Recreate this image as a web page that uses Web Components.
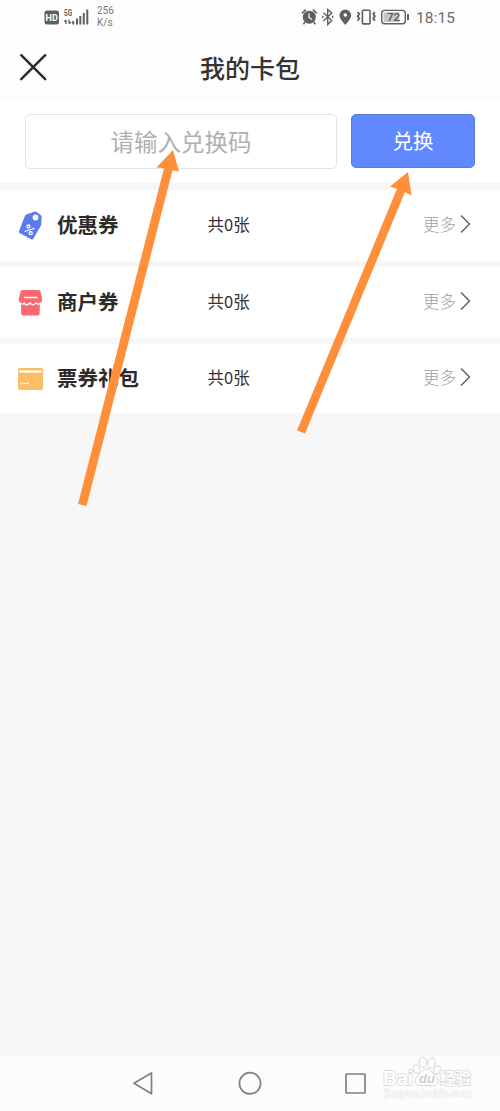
<!DOCTYPE html>
<html lang="zh-CN">
<head>
<meta charset="utf-8">
<title>我的卡包</title>
<style>
html,body{margin:0;height:100%;overflow:hidden}
body{font-family:"Noto Sans CJK SC",sans-serif;color:#2d2d2d;background:#f7f7f7}
</style>
</head>
<body>
<card-app></card-app>
<script>
const define=(name,html)=>customElements.define(name,class extends HTMLElement{
  constructor(){
    super();
    const t=document.createElement('template');
    t.innerHTML=html;
    this.attachShadow({mode:'open'}).append(t.content.cloneNode(true));
  }
});

define('status-bar',`<style>
:host{display:flex;height:35px;background:#fdfdfd;color:#606060;font-family:Roboto,sans-serif;align-items:flex-start}
svg{display:block;flex:none}
.net{margin-left:44px}
.rate{margin:5px 0 0 8px;font-size:10px;line-height:12px;color:#777}
.right{margin-left:auto;display:flex;padding-right:44px}
.time{width:40px;margin-left:6px;font-size:15.5px;line-height:20px;margin-top:8px;color:#6b6b6b;letter-spacing:.1px;white-space:nowrap}
</style>
<svg class="net" width="45" height="35" viewBox="44 0 45 35">
<rect x="44.5" y="10.5" width="14.5" height="14" rx="2.5" fill="#606060"/>
<text x="51.7" y="21" text-anchor="middle" font-family="Roboto" font-size="9" font-weight="700" fill="#fff">HD</text>
<text x="64" y="16" font-family="Roboto" font-size="8.5" font-weight="700" fill="#606060" textLength="8" lengthAdjust="spacingAndGlyphs">5G</text>
<path d="M66 24v-4m-1.6 1.8L66 19.8M69 19.5v4m1.8-1.7L69 23.8" stroke="#606060" stroke-width="1.3" fill="none"/>
<path d="M73.2 21v3.5M77 18.5v6M80.3 16v8.5M83.8 13v11.5M87.3 9.5v15" stroke="#606060" stroke-width="2"/>
</svg>
<div class="rate">256<br>K/s</div>
<div class="right">
<svg width="110" height="35" viewBox="300 0 110 35">
<g fill="none" stroke="#606060">
<circle cx="309.3" cy="17.2" r="6.5" fill="#606060" stroke="none"/>
<path d="M302 13.3l3.8-3.6M316.700 13.300l-3.800-3.600M305 22l-1.600 2.200M313.700 22l1.600 2.200" stroke-width="1.700"/>
<path d="M309 13.500v4l3 2" stroke="#fff" stroke-width="1.200"/>
<path d="M323.500 12.800l8.200 7.700-4 4V9.500l4 3.500-8.200 7.900" stroke-width="1.400"/>
<path d="M322.800 15.800v2.200m9.800-2.200v2.200" stroke-width="1.400"/>
<path d="M345.300 25C342 21 339.500 18.500 339.500 15.300a5.800 5.800 0 0 1 11.600 0c0 3.200-2.500 5.700-5.800 9.700z" fill="#606060" stroke="none"/>
<circle cx="345.300" cy="15" r="1.800" fill="#fff" stroke="none"/>
<rect x="362.400" y="10.300" width="7.600" height="13.600" rx="1" stroke-width="1.600"/>
<path d="M357.700 12l1.500 2-1.500 2.200 1.500 2-1.500 2.500M374.800 12l-1.500 2 1.500 2.200-1.500 2 1.500 2.500" stroke-width="1.900"/>
<rect x="381.700" y="10.400" width="23.600" height="13.400" rx="3" stroke-width="1.400" fill="#fff"/>
<path d="M385 12.200h14.500v9.800H385q-1.600 0-1.600-1.600v-6.600q0-1.600 1.600-1.600z" fill="#c8c8c8" stroke="none"/>
<path d="M408 14v6" stroke-width="2"/></g>
<text x="393.500" y="21.200" text-anchor="middle" font-family="Roboto" font-size="11.500" font-weight="500" fill="#555">72</text>
</svg>
<div class="time">18:15</div></div>`);

define('page-header',`<style>
:host{display:grid;grid-template-columns:66px 1fr 66px;height:65px;background:#fdfdfd;align-items:center}
h1{margin:-2px 0 0;text-align:center;font-family:KaiTi,STKaiti,"Noto Sans CJK SC",sans-serif;font-size:25px;font-weight:500;line-height:36px;color:#333}
svg{margin:-2px 0 0 19px}
</style>
<svg width="28" height="28" viewBox="0 0 28 28"><path d="M2.200 2.200l24 24M26.200 2.200L2.200 26.200" stroke="#292929" stroke-width="2.400" stroke-linecap="round"/></svg>
<h1><slot></slot></h1>`);

define('redeem-form',`<style>
:host{display:flex;height:83px;box-sizing:border-box;padding:14px 25px;gap:14px;background:#fff}
.field,.btn{box-sizing:border-box;text-align:center;border-radius:5px}
.field{width:312px;height:55px;border:1px solid #e4e4e4;font-size:23.5px;line-height:53px;color:#b0b0b0}
.btn{width:124px;height:54px;border:1px solid #5b78df;background:#6288ff;color:#fff;font-size:20.5px;line-height:50px}
</style>
<div class="field"><slot name="hint"></slot></div><div class="btn"><slot></slot></div>`);

define('coupon-row',`<style>
:host{display:grid;grid-template-columns:57px 150px 1fr auto 44px;height:71px;box-sizing:border-box;padding-bottom:3px;background:#fff;align-items:center}
::slotted(svg){display:block;margin-left:17px}
b{font-size:20.5px;line-height:30px;font-weight:700;color:#2b2b2b}
.n{font-size:16.5px;line-height:24px;color:#333;margin-left:.5px}
.more{font-size:16.5px;line-height:24px;color:#a0a0a0;font-weight:300}
.c{margin-left:3px;display:block}
</style>
<slot name="icon"></slot><b><slot></slot></b><span class="n"><slot name="count"></slot></span><span class="more">更多</span>
<svg class="c" width="14" height="20" viewBox="0 0 14 20"><path d="M2 1.500l8.500 8.500L2 18.500" fill="none" stroke="#666" stroke-width="1.500"/></svg>`);

define('nav-bar',`<style>
:host{display:block;height:55px;background:#fcfcfc}
svg{display:block}
</style>
<svg width="500" height="55" viewBox="0 1056 500 55">
<g fill="none" stroke="#808080" stroke-width="1.700" stroke-linejoin="round">
<path d="M134 1083.300L151.500 1073v20.700z"/><circle cx="250" cy="1083.300" r="10.600"/><rect x="346" y="1074" width="19" height="19" rx=".6"/></g></svg>`);

define('brand-mark',`<style>
:host{display:block}
svg{display:block}
</style>
<svg width="100" height="56" viewBox="378 1052 100 56">
<g fill="#fefefe" stroke="#d6d6d6" stroke-width="1.400" paint-order="stroke" stroke-linejoin="round" font-weight="700">
<text x="383" y="1085" font-family="Liberation Sans" font-size="20" textLength="30" lengthAdjust="spacingAndGlyphs">Bai</text>
<text x="440" y="1083.500" font-family="Noto Sans CJK SC" font-size="16" textLength="31" lengthAdjust="spacingAndGlyphs">经验</text>
<text x="384" y="1097" font-family="Liberation Sans" font-size="10" font-weight="400" stroke="#e6e6e6" stroke-width="1" textLength="88" lengthAdjust="spacingAndGlyphs">jingyan.baidu.com</text>
</g>
<g fill="#fefefe" stroke="#d6d6d6" stroke-width="1">
<ellipse cx="416.500" cy="1069" rx="3.200" ry="4.400" transform="rotate(-20 416.500 1069)"/>
<ellipse cx="422.800" cy="1062.300" rx="3.600" ry="5"/><ellipse cx="431.500" cy="1063" rx="3.600" ry="5" transform="rotate(12 431.500 1063)"/>
<ellipse cx="437" cy="1070" rx="3.200" ry="4.500" transform="rotate(18 437 1070)"/>
<path d="M426.800 1069c4 0 5.200 3.500 8.700 6.700c4.500 4 2.500 9.800-2 9.800h-13.500c-5 0-6.500-5.800-2-9.800c3.500-3.200 4.800-6.700 8.800-6.700z"/>
</g>
<text x="419" y="1083.300" font-family="Liberation Sans" font-size="13" font-weight="700" font-style="italic" fill="#cfcfcf">du</text>
</svg>`);

define('pointer-arrows',`<style>
:host{display:block;pointer-events:none}
svg{display:block}
</style>
<svg width="500" height="520" viewBox="0 0 500 520" fill="#ff8f3b">
<path d="M173 150L156.500 167.500L164 168.200L78 504L86.500 506L172.500 170.200L179 171.500Z"/>
<path d="M408 172L390 186.500L397 188.800L297 430.500L305 433.500L405 192L411.500 195.500Z"/>
</svg>`);

define('card-app',`<style>
:host{display:flex;flex-direction:column;position:relative;height:1111px;width:500px;background:#f7f7f7}
main{display:flex;flex-direction:column;gap:6px;padding-top:7px;flex:1}
coupon-row:nth-of-type(3){height:69px}
pointer-arrows{position:absolute;left:0;top:0}
brand-mark{position:absolute;left:378px;top:1052px}
</style>
<status-bar></status-bar>
<page-header>我的卡包</page-header>
<redeem-form><span slot="hint">请输入兑换码</span>兑换</redeem-form>
<main>
<coupon-row><svg slot="icon" width="27" height="31" viewBox="17 209.500 27 31"><path d="M26.500 215l7.500-2.800q1.300-.4 2.600.4l4 3q1.200.9 1.100 2.500l-.6 7.600-7.600 13.400q-.8 1.300-2.200.6l-11.500-6q-1.300-.8-.7-2.200l5.800-14.900q.5-1.200 1.600-1.600z" fill="#5b7bee"/><circle cx="35.500" cy="218" r="2.900" fill="#fff"/><path d="M24.500 232l10-3.200" stroke="#fff" stroke-width="1.300"/><g fill="none" stroke="#fff" stroke-width="1.300"><circle cx="28.400" cy="227" r="1.500"/><circle cx="30.700" cy="233.700" r="1.500"/></g></svg>优惠券<span slot="count">共0张</span></coupon-row>
<coupon-row><svg slot="icon" width="27" height="31" viewBox="17 286 27 31"><path d="M22.500 290h16q1.500 0 2 1.500l1.700 7.500q0 3.500-2.300 4l-.3 10.500q0 2-2 2H23.200q-2 0-2-2l-.2-10.500q-2.500-.5-2.300-4l1.900-7.500q.4-1.500 1.900-1.500z" fill="#fa6970"/><path d="M24 297.500h13.500" stroke="#fff" stroke-width="1.500"/><path d="M20 303q2 2.300 4.300 0q1 2.500 3.300 1.500t2.800-1.500q1.800 3 4 1.300l1.800-1.300q2.300 2.300 4.500 0" fill="none" stroke="#fff" stroke-width="1.400"/></svg>商户券<span slot="count">共0张</span></coupon-row>
<coupon-row><svg slot="icon" width="27" height="25" viewBox="17 365 27 25"><rect x="18" y="368" width="25" height="22" rx="2" fill="#fabe64"/><path d="M19 371.500h22.500" stroke="#fff" stroke-width="2.200"/><path d="M20.500 383.500h8" stroke="#fff" stroke-width="1.700" stroke-dasharray="2 1"/></svg>票券礼包<span slot="count">共0张</span></coupon-row>
</main>
<nav-bar></nav-bar>
<brand-mark></brand-mark>
<pointer-arrows></pointer-arrows>`);
</script>
</body>
</html>
